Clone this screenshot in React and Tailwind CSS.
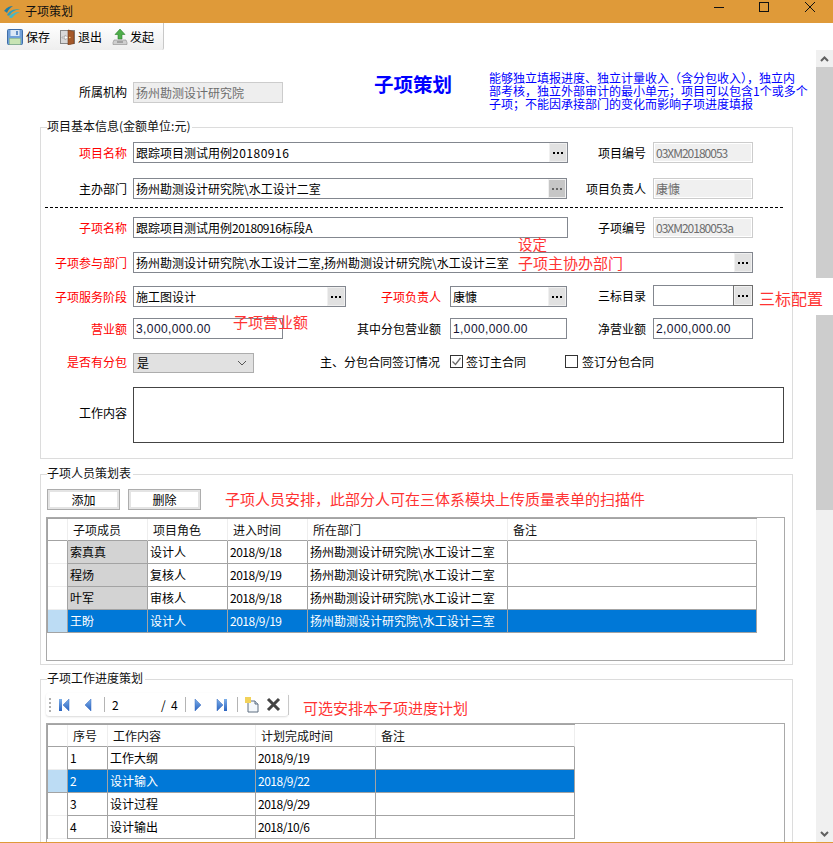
const Dots = ({ dim }) => (
  <span className="flex gap-[2px]">
    <i className={`block w-[2px] h-[2px] ${dim ? "bg-[#666666]" : "bg-black"}`} />
    <i className={`block w-[2px] h-[2px] ${dim ? "bg-[#666666]" : "bg-black"}`} />
    <i className={`block w-[2px] h-[2px] ${dim ? "bg-[#666666]" : "bg-black"}`} />
  </span>
);

const Label = ({ w, red, children, className = "" }) => (
  <div className={`${w} shrink-0 text-right whitespace-nowrap ${red ? "text-[#ff0000]" : "text-black"} ${className}`}>{children}</div>
);

const Field = ({ w, btn, dim, strong, children, className = "" }) => (
  <div className={`${w} h-[21px] shrink-0 flex items-stretch border border-[#83878f] bg-white ${className}`}>
    <div className="flex-1 min-w-0 px-[2px] flex items-center whitespace-nowrap overflow-hidden">{children}</div>
    {btn && (
      <div className={`w-[18px] shrink-0 flex items-center justify-center border border-[#f0f0f0] ${dim ? "bg-[#c6c6c6]" : "bg-[#e1e1e1]"} ${strong ? "outline outline-[#6e6e6e]" : ""}`}>
        <Dots dim={dim} />
      </div>
    )}
  </div>
);

const ReadOnly = ({ children, mono }) => (
  <div className="w-[100px] h-[21px] shrink-0 border border-[#cccccc] bg-white p-[1px]">
    <div className={`h-full bg-[#f0f0f0] flex items-center pl-[1px] text-[#6d6d6d] whitespace-nowrap overflow-hidden ${mono ? "tracking-[-1px]" : ""}`}>{children}</div>
  </div>
);

const Group = ({ legend, className = "", children }) => (
  <div className={`relative w-[753px] border border-[#dcdcdc] -ml-px ${className}`}>
    <div className="absolute left-[6px] top-[-10px] bg-white pr-[2px] leading-[16px] whitespace-nowrap text-[#111111]">{legend}</div>
    {children}
  </div>
);

const Num = ({ children }) => <span className="tracking-[-0.5px]">{children}</span>;
const Money = ({ children }) => <span className="font-['Liberation_Sans',sans-serif] text-[#111133] tracking-[0.4px]">{children}</span>;

const GridTable = ({ cols, head, rows, firstGray, selected, className = "" }) => (
  <div className={`w-[739px] border border-[#a9a9a9] bg-white overflow-hidden ${className}`}>
    <div className="w-fit border-l border-t border-[#a3a3a3]">
      <div className="flex h-[22px]">
        <div className="w-[19px] border-b border-[#a3a3a3]" />
        {head.map((h, i) => (
          <div key={h} className={`${cols[i]} border-l border-[#eeeeee] border-b border-b-[#a3a3a3] pl-[5px] flex items-center text-[#111111] ${i === head.length - 1 ? "border-r" : ""}`}>{h}</div>
        ))}
      </div>
      {rows.map((row, r) => {
        const sel = r === selected;
        return (
          <div key={r} className="flex h-[23px]">
            <div className={`w-[19px] border-b ${sel ? "bg-[#bcdcf4] border-[#a3a3a3]" : "border-[#eeeeee]"}`} />
            {row.map((c, i) => (
              <div key={i} className={`${cols[i]} border-l border-b border-[#a3a3a3] pl-[2px] flex items-center whitespace-nowrap overflow-hidden ${sel ? "bg-[#0078d7] text-white" : firstGray && i === 0 ? "bg-[#d3d3d3] text-black" : "text-black"} ${i === row.length - 1 ? "border-r" : ""}`}>{c}</div>
            ))}
          </div>
        );
      })}
    </div>
  </div>
);

const NavTri = ({ dir, bar }) => (
  <svg width="12" height="14" viewBox="0 0 12 14">
    <defs>
      <linearGradient id="navblue" x1="0" y1="0" x2="0" y2="1">
        <stop offset="0" stopColor="#7eb0ea" />
        <stop offset="1" stopColor="#2a62c0" />
      </linearGradient>
    </defs>
    {dir === "l" ? (
      <>
        {bar && <rect x="1" y="1" width="3" height="12" fill="url(#navblue)" />}
        <path d={bar ? "M11 1v12L5 7z" : "M9 1v12L3 7z"} fill="url(#navblue)" stroke="#3a6cc0" strokeWidth="0.5" />
      </>
    ) : (
      <>
        {bar && <rect x="8" y="1" width="3" height="12" fill="url(#navblue)" />}
        <path d={bar ? "M1 1v12l6-6z" : "M3 1v12l6-6z"} fill="url(#navblue)" stroke="#3a6cc0" strokeWidth="0.5" />
      </>
    )}
  </svg>
);

const Sep = ({ className = "" }) => <div className={`w-px h-[15px] bg-[#b4b4b4] ${className}`} />;

export default function App() {
  const cols1 = ["w-[80px]", "w-[80px]", "w-[80px]", "w-[200px]", "w-[250px]"];
  const cols2 = ["w-[40px]", "w-[148px]", "w-[120px]", "w-[200px]"];
  const d = (s) => <Num>{s}</Num>;
  const people = [
    ["索真真", "设计人", d("2018/9/18"), "扬州勘测设计研究院\\水工设计二室", ""],
    ["程炀", "复核人", d("2018/9/19"), "扬州勘测设计研究院\\水工设计二室", ""],
    ["叶军", "审核人", d("2018/9/18"), "扬州勘测设计研究院\\水工设计二室", ""],
    ["王盼", "设计人", d("2018/9/19"), "扬州勘测设计研究院\\水工设计三室", ""],
  ];
  const tasks = [
    ["1", "工作大纲", d("2018/9/19"), ""],
    ["2", "设计输入", d("2018/9/22"), ""],
    ["3", "设计过程", d("2018/9/29"), ""],
    ["4", "设计输出", d("2018/10/6"), ""],
  ];
  const note = "absolute whitespace-nowrap text-[#ff3333] leading-none";

  return (
    <div className="relative w-[833px] h-[843px] overflow-hidden bg-white text-[12px] leading-[14px] text-black font-['Noto_Sans_CJK_SC','Liberation_Sans',sans-serif]">
      {/* title bar */}
      <div className="h-[23px] bg-[#df9a39] flex items-center">
        <svg className="ml-[3px]" width="18" height="14" viewBox="0 0 18 14">
          <path d="M1 6C4 2 7 1 10 1 7 3 5 5 4 8 3 7 2 6 1 6z" fill="#1f7fa8" />
          <path d="M4 10C6 6 10 4 17 4c-4 1-8 2-10 6-1 1-2 1-3 0z" fill="#2a9fc0" />
          <path d="M6 12c2-3 6-5 11-5-3 1-6 3-8 6-1 0-2 0-3-1z" fill="#45b7c6" />
        </svg>
        <span className="ml-[4px] text-[#111111] -translate-y-px">子项策划</span>
        <div className="ml-auto flex items-start h-full pt-px">
          <svg width="12" height="12" viewBox="0 0 12 12" className="mr-[33px]"><path d="M1 6.5h10" stroke="#111" strokeWidth="1" /></svg>
          <svg width="12" height="12" viewBox="0 0 12 12" className="mr-[34px]"><rect x="1.5" y="1.5" width="9" height="9" fill="none" stroke="#111" /></svg>
          <svg width="12" height="12" viewBox="0 0 12 12" className="mr-[17px]"><path d="M1 1l10 10M11 1L1 11" stroke="#111" strokeWidth="1" /></svg>
        </div>
      </div>

      {/* toolbar */}
      <div className="h-[27px] w-[164px] flex items-center bg-gradient-to-b from-white to-[#eeeeee] border-r border-[#c8c8c8] rounded-br-[2px] pl-[7px]">
        <svg width="16" height="16" viewBox="0 0 16 16" className="shrink-0">
          <rect x="0.5" y="0.5" width="15" height="15" rx="1" fill="#6f9fd8" stroke="#3f6ea8" />
          <rect x="3.5" y="1" width="9" height="6" fill="#dbe7f5" />
          <rect x="9" y="2" width="2" height="4" fill="#5f8cc4" />
          <rect x="2.5" y="9.5" width="11" height="6" fill="#c8e4b4" stroke="#8cb878" strokeWidth="0.5" />
        </svg>
        <span className="ml-[3px] w-[34px] shrink-0">保存</span>
        <svg width="16" height="16" viewBox="0 0 16 16" className="shrink-0">
          <rect x="0.5" y="1.5" width="14" height="13" fill="#d8d8d8" stroke="#888" />
          <path d="M8 1l6 1.5v12L8 16z" fill="#a4592a" stroke="#6f3a17" strokeWidth="0.6" />
          <path d="M2 8h3V6l3 2.5L5 11V9H2z" fill="#fff" stroke="#888" strokeWidth="0.5" />
          <circle cx="9.8" cy="8.5" r="0.8" fill="#f0d080" />
        </svg>
        <span className="ml-[2px] w-[34px] shrink-0">退出</span>
        <svg width="16" height="16" viewBox="0 0 16 16" className="shrink-0">
          <path d="M8 0l5 5.5h-3V10H6V5.5H3z" fill="#4fae4a" stroke="#2d7f2b" strokeWidth="0.6" />
          <path d="M2 11h12l1 2.5v2H1v-2z" fill="#cfcfcf" stroke="#8a8a8a" strokeWidth="0.6" />
          <rect x="5" y="12.5" width="6" height="1" fill="#777" />
        </svg>
        <span className="ml-[2px] shrink-0">发起</span>
      </div>

      <div className="flex h-[793px]">
        {/* page */}
        <div className="w-[816px] shrink-0 overflow-hidden">
          {/* heading row */}
          <div className="h-[77px] flex items-start pl-[41px]">
            <Label w="w-[86px]" className="mt-[35px]">所属机构</Label>
            <div className="ml-[6px] mt-[32px] w-[150px] h-[21px] border border-[#cccccc] bg-[#eeeeee] flex items-center pl-[2px] text-[#6d6d6d] whitespace-nowrap">扬州勘测设计研究院</div>
            <div className="ml-[91px] mt-[22px] w-[78px] shrink-0 text-[19.5px] leading-[24px] font-bold text-[#0000ff] whitespace-nowrap">子项策划</div>
            <div className="ml-[37px] mt-[21px] text-[#0000ff] leading-[13px] whitespace-nowrap">
              <div>能够独立填报进度、独立计量收入（含分包收入），独立内</div>
              <div>部考核，独立外部审计的最小单元；项目可以包含1个或多个</div>
              <div>子项；不能因承接部门的变化而影响子项进度填报</div>
            </div>
          </div>

          <div className="pl-[41px]">
            {/* basic information */}
            <Group legend="项目基本信息(金额单位:元)" className="pt-[14px] pb-[15px]">
              <div className="flex items-center h-[21px]">
                <Label w="w-[86px]" red>项目名称</Label>
                <Field w="w-[435px] ml-[6px]" btn><span>跟踪项目测试用例<span className="tracking-[0.5px]">20180916</span></span></Field>
                <Label w="w-[78px]">项目编号</Label>
                <div className="ml-[7px]"><ReadOnly mono>03XM20180053</ReadOnly></div>
              </div>
              <div className="flex items-center h-[21px] mt-[15px]">
                <Label w="w-[86px]">主办部门</Label>
                <Field w="w-[434px] ml-[6px]" btn dim>扬州勘测设计研究院\水工设计二室</Field>
                <Label w="w-[79px]">项目负责人</Label>
                <div className="ml-[7px]"><ReadOnly>康慷</ReadOnly></div>
              </div>
              <div className="mt-[8px] ml-[4px] w-[738px] border-t border-dashed border-black" />
              <div className="flex items-center h-[21px] mt-[9px]">
                <Label w="w-[86px]" red>子项名称</Label>
                <Field w="w-[435px] ml-[6px]">跟踪项目测试用例<Num>20180916</Num>标段A</Field>
                <Label w="w-[78px]">子项编号</Label>
                <div className="ml-[7px]"><ReadOnly mono>03XM20180053a</ReadOnly></div>
              </div>
              <div className="flex items-center h-[21px] mt-[14px]">
                <Label w="w-[86px]" red>子项参与部门</Label>
                <Field w="w-[620px] ml-[6px]" btn>扬州勘测设计研究院\水工设计二室,扬州勘测设计研究院\水工设计三室</Field>
              </div>
              <div className="flex items-center h-[21px] mt-[13px]">
                <Label w="w-[86px]" red>子项服务阶段</Label>
                <Field w="w-[213px] ml-[6px]" btn>施工图设计</Field>
                <Label w="w-[95px]" red>子项负责人</Label>
                <Field w="w-[117px] ml-[9px]" btn>康慷</Field>
                <Label w="w-[79px]" className="-translate-y-px">三标目录</Label>
                <Field w="w-[100px] ml-[7px] -translate-y-px" btn strong />
              </div>
              <div className="flex items-center h-[21px] mt-[11px]">
                <Label w="w-[86px]" red>营业额</Label>
                <Field w="w-[150px] ml-[6px]"><Money>3,000,000.00</Money></Field>
                <Label w="w-[158px]">其中分包营业额</Label>
                <Field w="w-[117px] ml-[9px]"><Money>1,000,000.00</Money></Field>
                <Label w="w-[79px]">净营业额</Label>
                <Field w="w-[100px] ml-[7px]"><Money>2,000,000.00</Money></Field>
              </div>
              <div className="flex items-center h-[17px] mt-[14px]">
                <Label w="w-[86px]" red>是否有分包</Label>
                <div className="ml-[6px] w-[121px] h-[20px] self-start shrink-0 border border-[#adadad] bg-[#e1e1e1] flex items-center justify-between pl-[3px] pr-[6px]">
                  <span>是</span>
                  <svg width="10" height="6" viewBox="0 0 10 6"><path d="M1 1l4 4 4-4" fill="none" stroke="#555" /></svg>
                </div>
                <Label w="w-[186px]">主、分包合同签订情况</Label>
                <div className="ml-[10px] w-[13px] h-[13px] shrink-0 border border-[#333333] flex items-center justify-center">
                  <svg width="11" height="11" viewBox="0 0 11 11"><path d="M1.5 5.5l3 3 5-6.5" fill="none" stroke="#6b6b6b" strokeWidth="1.3" /></svg>
                </div>
                <span className="ml-[3px] w-[99px] shrink-0">签订主合同</span>
                <div className="w-[13px] h-[13px] shrink-0 border border-[#333333]" />
                <span className="ml-[4px] shrink-0">签订分包合同</span>
              </div>
              <div className="flex items-center mt-[17px]">
                <Label w="w-[86px]" className="-translate-y-[2px]">工作内容</Label>
                <div className="ml-[6px] w-[651px] h-[56px] border border-[#444444]" />
              </div>
            </Group>

            {/* people */}
            <Group legend="子项人员策划表" className="mt-[15px] pt-[14px] pb-[3px] pl-[5px]">
              <div className="flex items-center h-[21px] ml-[1px]">
                <button className="w-[73px] h-[21px] border border-[#adadad] shadow-[inset_0_0_0_2px_#e4e4e4] bg-white">添加</button>
                <button className="ml-[8px] w-[73px] h-[21px] border border-[#adadad] shadow-[inset_0_0_0_2px_#e4e4e4] bg-white">删除</button>
                <span className="ml-[24px] text-[15px] text-[#ff3333] whitespace-nowrap -translate-y-px">子项人员安排，此部分人可在三体系模块上传质量表单的扫描件</span>
              </div>
              <GridTable className="mt-[7px] h-[144px]" cols={cols1} head={["子项成员", "项目角色", "进入时间", "所在部门", "备注"]} rows={people} firstGray selected={3} />
            </Group>

            {/* schedule */}
            <Group legend="子项工作进度策划" className="mt-[14px] pt-[13px] pl-[5px] h-[200px]">
              <div className="flex items-end h-[23px]">
                <div className="w-[242px] h-[23px] shrink-0 rounded-[3px] shadow-[0_1px_2px_rgba(0,0,0,0.15)] bg-white flex items-center">
                  <div className="ml-[3px] w-[2px] h-[14px] border-l-2 border-dotted border-[#b0b0b0]" />
                  <div className="ml-[7px]"><NavTri dir="l" bar /></div>
                  <div className="ml-[12px]"><NavTri dir="l" /></div>
                  <Sep className="ml-[10px]" />
                  <span className="ml-[7px] w-[49px] shrink-0">2</span>
                  <span className="w-[24px] shrink-0 whitespace-pre">/  4</span>
                  <Sep />
                  <div className="ml-[6px]"><NavTri dir="r" /></div>
                  <div className="ml-[12px]"><NavTri dir="r" bar /></div>
                  <Sep className="ml-[9px]" />
                  <svg width="16" height="18" viewBox="0 0 16 18" className="ml-[6px]">
                    <path d="M4 5h7l3 3v8H4z" fill="#f4f8fc" stroke="#5f6f80" />
                    <path d="M11 5v3h3" fill="#c8d8e8" stroke="#5f6f80" />
                    <rect x="1" y="1" width="6" height="6" fill="#f2d25a" />
                  </svg>
                  <svg width="15" height="15" viewBox="0 0 15 15" className="ml-[6px]">
                    <path d="M2 2l11 11M13 2L2 13" stroke="#444444" strokeWidth="3" />
                  </svg>
                </div>
                <div className="w-px h-[20px] bg-[#c8c8c8] self-center" />
                <span className="ml-[14px] text-[15px] leading-[20px] text-[#ff3333] whitespace-nowrap translate-y-[2px]">可选安排本子项进度计划</span>
              </div>
              <GridTable className="mt-[7px] h-[140px]" cols={cols2} head={["序号", "工作内容", "计划完成时间", "备注"]} rows={tasks} selected={1} />
            </Group>
          </div>
        </div>

        {/* scrollbar */}
        <div className="relative w-[17px] shrink-0 bg-[#f0f0f0] flex flex-col">
          <div className="h-[17px] flex items-center justify-center">
            <svg width="9" height="6" viewBox="0 0 9 6"><path d="M1 5l3.5-3.5L8 5" fill="none" stroke="#606060" strokeWidth="2" /></svg>
          </div>
          <div className="h-[443px] bg-[#cdcdcd]" />
          <div className="absolute left-0 top-[228px] w-full h-[37px] bg-white" />
          <div className="mt-auto h-[18px] flex items-center justify-center">
            <svg width="9" height="6" viewBox="0 0 9 6"><path d="M1 1l3.5 3.5L8 1" fill="none" stroke="#606060" strokeWidth="2" /></svg>
          </div>
        </div>
      </div>

      {/* hand-written annotations over the form */}
      <div className={`${note} left-[518px] top-[237px] text-[14.5px]`}>设定</div>
      <div className={`${note} left-[518px] top-[255px] text-[15px]`}>子项主协办部门</div>
      <div className={`${note} left-[233px] top-[314px] text-[15px]`}>子项营业额</div>
      <div className={`${note} left-[759px] top-[290px] text-[16px]`}>三标配置</div>

      <div className="absolute left-0 bottom-0 w-full h-px bg-[#df9a39]" />
    </div>
  );
}
